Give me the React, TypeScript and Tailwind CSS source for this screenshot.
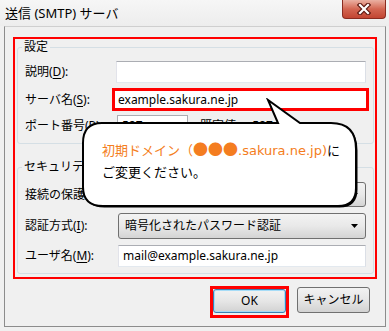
import React from 'react';

// SMTP server settings dialog with a callout bubble

const U = ({ c }: { c: string }) => <span className="underline underline-offset-[2px]">{c}</span>;

const Select = ({ text, h }: { text: string; h: string }) => (
  <div
    className={`flex ${h} w-[248px] items-center justify-between rounded-[3px] border border-[#707070] bg-gradient-to-b from-[#f3f3f3] via-[#e9e9e9] to-[#d4d4d4] pl-[6px] pr-[7px]`}
  >
    <span>{text}</span>
    <svg width="7" height="4" viewBox="0 0 7 4">
      <path d="M0 0 H7 L3.5 4 Z" fill="#000" />
    </svg>
  </div>
);

const bubble =
  'M102 123 L278 123 L268 100 L300 123 L331 123 Q356 123 356 149 L356 188 Q356 206 338 206 L103 206 Q83 206 83 187 L83 143 Q83 123 102 123 Z';

export default function App() {
  return (
    <div className="relative h-[331px] w-[389px] overflow-hidden bg-[#f0f0f0] font-['Noto_Sans','Noto_Sans_CJK_JP',sans-serif] text-[12px] leading-[16px] text-black">
      {/* title bar */}
      <div className="flex h-[26px] items-start justify-between bg-gradient-to-b from-[#f6f6f6] to-[#ededed]">
        <span className="pl-[5px] pt-[5px] text-[13px] leading-[16px]">送信 (SMTP) サーバ</span>
        <div className="mr-[3px] flex h-[19px] w-[44px] items-center justify-center rounded-b-[4px] border border-t-0 border-[#8a2c20] bg-gradient-to-b from-[#eab0a2] via-[#d36652] to-[#c24532]">
          <svg width="14" height="12" viewBox="0 0 14 12">
            <path d="M3 2 L11 10 M11 2 L3 10" stroke="#5e1a12" strokeWidth="4.5" strokeLinecap="square" />
            <path d="M3 2 L11 10 M11 2 L3 10" stroke="#fff" strokeWidth="2.2" strokeLinecap="square" />
          </svg>
        </div>
      </div>

      {/* dialog body */}
      <div className="ml-[4px] flex h-[301px] w-[382px] flex-col border border-[#8c8c8c] border-t-[#cfcfcf]">
        <div className="ml-[8px] mt-[10px] flex h-[242px] w-[364px] flex-col border-2 border-[#ff0000] pl-[2px]">
          <fieldset className="h-[105px] w-[357px] rounded-[3px] border border-[#d5dfe5] pt-[6px]">
            <legend className="ml-[4px] px-[2px] leading-[16px]">設定</legend>
            <div className="flex h-[22px] items-center">
              <span className="w-[98px] shrink-0 pl-[7px]">
                説明(<U c="D" />):
              </span>
              <div className="h-[22px] w-[250px] border border-[#abadb3] border-b-[#e3e9ef] border-l-[#e2e3ea] border-r-[#dbdfe6] bg-white" />
            </div>
            <div className="mt-[5px] flex h-[23px] items-center">
              <span className="w-[98px] shrink-0 pl-[7px]">
                サーバ名(<U c="S" />):
              </span>
              <div className="-ml-[4px] flex h-[23px] w-[257px] items-center border-[3px] border-[#ff0000] bg-white pl-[3px]">
                example.sakura.ne.jp
              </div>
            </div>
            <div className="mt-[4px] flex h-[22px] items-center">
              <span className="w-[98px] shrink-0 pl-[7px]">
                ポート番号(<U c="P" />):
              </span>
              <div className="ml-[1px] flex h-[22px] w-[71px] items-center border border-[#abadb3] border-b-[#e3e9ef] bg-white pl-[4px]">
                587
              </div>
              <span className="ml-[12px]">既定値:</span>
              <span className="ml-[13px]">587</span>
            </div>
          </fieldset>

          <fieldset className="mt-[15px] h-[115px] w-[357px] rounded-[3px] border border-[#d5dfe5] pt-[7px]">
            <legend className="ml-[4px] px-[2px] leading-[16px]">セキュリティと認証</legend>
            <div className="flex items-center">
              <span className="w-[100px] shrink-0 pl-[7px]">
                接続の保護(<U c="N" />):
              </span>
              <Select text="STARTTLS" h="h-[25px]" />
            </div>
            <div className="mt-[6px] flex items-center">
              <span className="w-[100px] shrink-0 pl-[7px]">
                認証方式(<U c="I" />):
              </span>
              <Select text="暗号化されたパスワード認証" h="h-[26px]" />
            </div>
            <div className="mt-[6px] flex items-center">
              <span className="w-[100px] shrink-0 pl-[7px]">
                ユーザ名(<U c="M" />):
              </span>
              <div className="flex h-[22px] w-[248px] items-center border border-[#abadb3] border-b-[#e3e9ef] border-l-[#e2e3ea] border-r-[#dbdfe6] bg-white pl-[4px]">
                mail@example.sakura.ne.jp
              </div>
            </div>
          </fieldset>
        </div>

        <div className="mt-[7px] flex items-start justify-end gap-[8px] pr-[15px]">
          <div className="h-[32px] w-[79px] border-[3px] border-[#ff0000]">
            <button className="flex h-[24px] w-[73px] items-center justify-center rounded-[3px] border border-[#3c7fb1] bg-gradient-to-b from-[#f2f2f2] via-[#e6e6e6] to-[#d2d2d2] shadow-[inset_0_0_0_1px_#a6dcf7]">
              OK
            </button>
          </div>
          <button className="mt-[1px] flex h-[26px] w-[73px] items-center justify-center rounded-[3px] border border-[#707070] bg-gradient-to-b from-[#f2f2f2] via-[#e6e6e6] to-[#d2d2d2]">
            キャンセル
          </button>
        </div>
      </div>

      {/* callout bubble */}
      <div className="absolute left-[81px] top-[98px] h-[112px] w-[279px]">
        <svg className="absolute inset-0" width="279" height="112" viewBox="81 98 279 112">
          <path d={bubble} transform="translate(1.5 1.5)" fill="#000" />
          <path d={bubble} fill="#fff" stroke="#000" strokeWidth="2" />
        </svg>
        <div className="relative pl-[21px] pt-[40px] font-['DejaVu_Sans','Noto_Sans_CJK_JP',sans-serif] text-[13px] leading-[21px]">
          <p className="whitespace-nowrap text-[#f47d20]">
            <span className="font-['Noto_Sans_CJK_JP',sans-serif]">初期ドメイン（</span>
            <span className="font-['Noto_Sans_CJK_JP',sans-serif] text-[15px]">●●●</span>
            .sakura.ne.jp)
            <span className="font-['Noto_Sans_CJK_JP',sans-serif] text-black">に</span>
          </p>
          <p className="font-['Noto_Sans_CJK_JP',sans-serif]">ご変更ください。</p>
        </div>
      </div>
    </div>
  );
}
